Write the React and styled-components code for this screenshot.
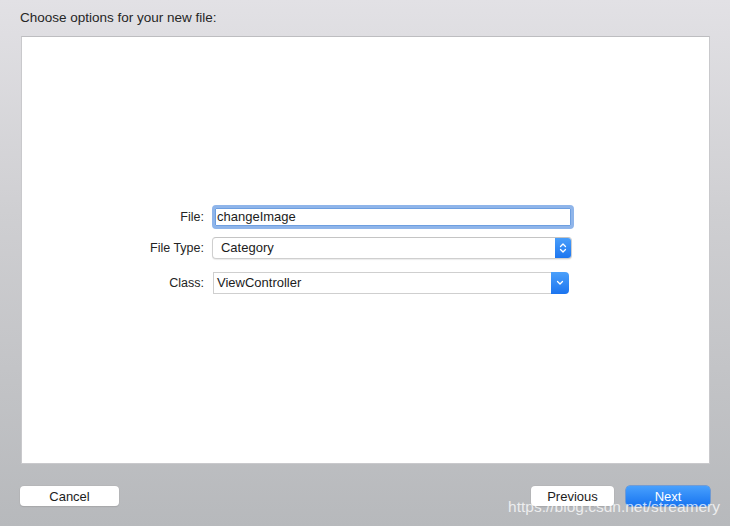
import React from 'react';
import styled, { createGlobalStyle } from 'styled-components';

const Global = createGlobalStyle`
  html, body { margin: 0; padding: 0; }
  body { font-family: "Liberation Sans", Arial, sans-serif; }
`;

const Window = styled.div`
  position: relative;
  height: 526px;
  box-sizing: border-box;
  display: flex;
  flex-direction: column;
  padding: 0 20px;
  background: linear-gradient(#e2e1e5, #cfcfd2 40%, #b7b9bc);
  overflow: hidden;
`;

const Header = styled.div`
  height: 36px;
  display: flex;
  align-items: center;
  padding-bottom: 1px;
  box-sizing: border-box;
  font-size: 13.5px;
  color: #262626;
`;

const Panel = styled.div`
  flex: 1;
  margin-left: 1px;
  background: #fff;
  border: 1px solid #c9c9cc;
  border-top-color: #bdbdc0;
  box-sizing: border-box;
  display: flex;
  align-items: center;
  justify-content: center;
  padding: 0 0 2px 0;
`;

const Form = styled.div`
  display: grid;
  grid-template-columns: auto 362px;
  column-gap: 8px;
  align-items: center;
  margin-right: 7px;
`;

const Label = styled.div`
  font-size: 12.5px;
  color: #242424;
  text-align: right;
  margin-top: ${p => p.$mt || 0}px;
`;

const Field = styled.div`
  margin-top: ${p => p.$mt || 0}px;
`;

const TextInput = styled.div`
  height: 24px;
  box-sizing: border-box;
  border: 3px solid #8fb5ea;
  border-radius: 4px;
  background: #fff;
  display: flex;
  align-items: center;
  padding-left: 2px;
  font-size: 13px;
  color: #1c1c1c;
  box-shadow: inset 0 0 0 1px #6e9fe0;
`;

const Popup = styled.div`
  height: 22px;
  width: 360px;
  box-sizing: border-box;
  border-radius: 4px;
  background: #fff;
  border: 1px solid #cfcfcf;
  border-top-color: #c4c4c4;
  box-shadow: 0 1px 1px rgba(0,0,0,0.08);
  display: flex;
  align-items: center;
  font-size: 13px;
  color: #1c1c1c;
  overflow: hidden;
`;

const PopupText = styled.div`
  flex: 1;
  padding-left: 8px;
`;

const ArrowBox = styled.div`
  width: ${p => p.$w}px;
  align-self: stretch;
  margin: -1px -1px -1px 0;
  background: linear-gradient(#4ba0fb, #1b74ef);
  border-radius: ${p => p.$r};
  display: flex;
  align-items: center;
  justify-content: center;
`;

const Combo = styled.div`
  height: 22px;
  width: 356px;
  margin-left: 1px;
  display: flex;
  align-items: stretch;
  font-size: 13px;
  color: #1c1c1c;
`;

const ComboText = styled.div`
  flex: 1;
  box-sizing: border-box;
  border: 1px solid #cfcfcf;
  border-right: none;
  display: flex;
  align-items: center;
  padding-left: 3px;
  background: #fff;
`;

const Footer = styled.div`
  height: 62px;
  box-sizing: border-box;
  padding-top: 22px;
  display: flex;
  align-items: flex-start;
`;

const Button = styled.div`
  width: ${p => p.$w}px;
  height: 20px;
  box-sizing: border-box;
  border-radius: 4px;
  display: flex;
  align-items: center;
  justify-content: center;
  font-size: 13px;
  margin-left: ${p => p.$ml || 0}px;
  background: ${p => (p.$primary ? 'linear-gradient(#48a0fd, #1875f1)' : '#fff')};
  color: ${p => (p.$primary ? '#fff' : '#1c1c1c')};
  box-shadow: ${p =>
    p.$primary
      ? '0 0 0 0.5px #2c7de8, 0 1px 1px rgba(0,0,0,0.15)'
      : '0 0 0 0.5px #b2b2b4, 0 1px 1px rgba(0,0,0,0.15)'};
`;

const Spacer = styled.div`
  flex: 1;
`;

const Watermark = styled.div`
  position: absolute;
  right: 10px;
  bottom: 10px;
  font-size: 15.5px;
  color: rgba(255, 255, 255, 0.75);
`;

function UpDown() {
  return (
    <svg width="8" height="12" viewBox="0 0 8 12">
      <path d="M1.5 4.5 L4 2 L6.5 4.5 M1.5 7.5 L4 10 L6.5 7.5" fill="none" stroke="#fff" strokeWidth="1.3" strokeLinecap="round" strokeLinejoin="round" />
    </svg>
  );
}

function Down() {
  return (
    <svg width="8" height="6" viewBox="0 0 8 6">
      <path d="M1.5 1.5 L4 4 L6.5 1.5" fill="none" stroke="#fff" strokeWidth="1.3" strokeLinecap="round" strokeLinejoin="round" />
    </svg>
  );
}

export default function App() {
  return (
    <>
      <Global />
      <Window>
        <Header>Choose options for your new file:</Header>
        <Panel>
          <Form>
            <Label>File:</Label>
            <Field>
              <TextInput>changeImage</TextInput>
            </Field>

            <Label $mt={8}>File Type:</Label>
            <Field $mt={8}>
              <Popup>
                <PopupText>Category</PopupText>
                <ArrowBox $w={17} $r="0 4px 4px 0">
                  <UpDown />
                </ArrowBox>
              </Popup>
            </Field>

            <Label $mt={13}>Class:</Label>
            <Field $mt={13}>
              <Combo>
                <ComboText>ViewController</ComboText>
                <ArrowBox $w={18} $r="0 4px 4px 0" style={{ margin: 0 }}>
                  <Down />
                </ArrowBox>
              </Combo>
            </Field>
          </Form>
        </Panel>
        <Footer>
          <Button $w={99}>Cancel</Button>
          <Spacer />
          <Button $w={83}>Previous</Button>
          <Button $w={84} $ml={12} $primary>Next</Button>
        </Footer>
        <Watermark>https://blog.csdn.net/streamery</Watermark>
      </Window>
    </>
  );
}
